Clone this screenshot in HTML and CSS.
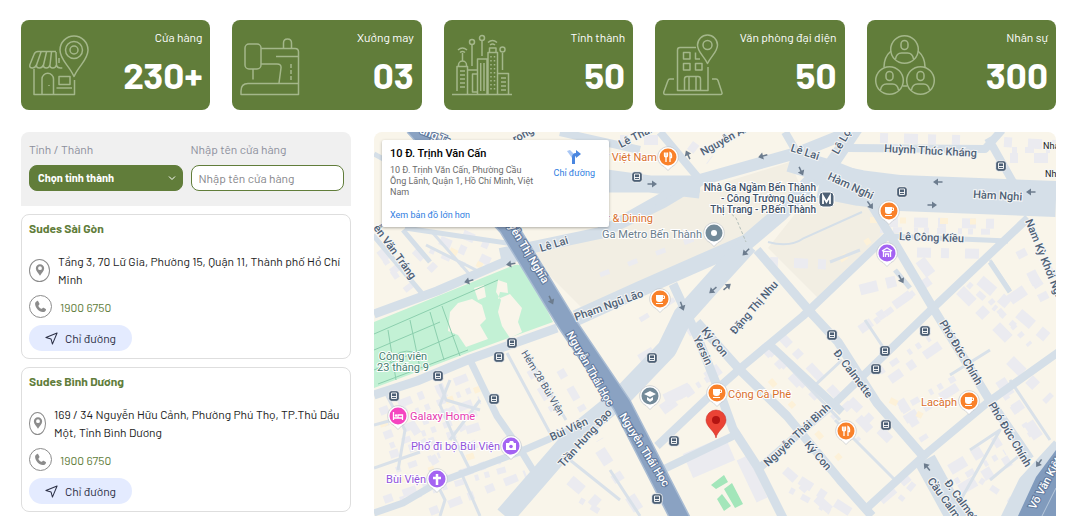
FILE: index.html
```html
<!DOCTYPE html>
<html lang="vi">
<head>
    <meta charset="UTF-8">
    <meta name="viewport" content="width=device-width, initial-scale=1.0">
    <title>Hệ thống cửa hàng</title>
    <link rel="stylesheet" href="styles.css">
</head>
<body>
    <!-- Icon dùng chung -->
    <svg class="sprite" aria-hidden="true">
        <symbol id="i-place" viewBox="0 0 12 16"><path fill="currentColor" fill-rule="evenodd" d="M6 1a5 5 0 0 0-5 5c0 3.500 3 5.500 5 9 2-3.500 5-5.500 5-9a5 5 0 0 0-5-5zm0 2.500a2.300 2.300 0 1 1 0 4.600 2.300 2.300 0 0 1 0-4.600z"/></symbol>
        <symbol id="i-phone" viewBox="0 0 14 14"><path fill="currentColor" d="M3.500 1C2 1.500 1 2.700 1.200 4.500c.5 4.300 4 7.800 8.300 8.400 1.600.2 3-.8 3.400-2.200.1-.4 0-.7-.3-.9L10.400 8.400c-.3-.2-.7-.2-1 .1l-.9.9c-.3.2-.6.2-.9 0C6.400 8.700 5.500 7.800 4.800 6.700c-.2-.3-.2-.6.100-.9l.8-.9c.3-.3.3-.6.1-1L4.500 1.400C4.300 1 3.900.8 3.500 1z"/></symbol>
        <symbol id="i-send" viewBox="0 0 14 14"><path fill="none" stroke="currentColor" stroke-width="1.100" stroke-linejoin="round" d="M13 1 1 6l5.500 1.500L8 13z"/></symbol>
        <symbol id="m-pin" viewBox="-12 -12 24 28"><path fill="#fff" stroke="#b9bdc2" stroke-width=".6" d="M0 13.500-4 9.500A10.300 10.300 0 1 1 4 9.500z"/><circle r="8.500" fill="currentColor"/></symbol>
        <symbol id="m-cup" viewBox="-6 -6 12 12"><path fill="#fff" d="M-4-4h7v4q0 3-3 3h-1q-3 0-3-3zM-4 4h7v1h-7z"/><path fill="none" stroke="#fff" d="M3-3h1.500v2.500H3"/></symbol>
        <symbol id="m-fork" viewBox="-6 -6 12 12"><path fill="none" stroke="#fff" stroke-width="1.300" d="M-3.500-4.500v3q0 1.500 1.500 1.500t1.500-1.500v-3M-2-4.500v9.500M2 5v-9.500q2 1 1.500 5H2"/></symbol>
        <symbol id="m-bus" viewBox="-6 -6 12 12"><rect x="-5.300" y="-5.300" width="10.600" height="10.600" rx="3" fill="#4d6075" stroke="#fff" stroke-width=".8"/><path fill="none" stroke="#fff" stroke-width=".9" d="M-2.500-3h5v5.500h-5zM-2.500.5h5"/></symbol>
        <symbol id="m-arrow" viewBox="-6 -6 12 12"><path fill="none" stroke="#6c7c8e" stroke-width="1.500" d="M-4.500 0h6"/><path fill="#6c7c8e" d="M0-3.500 5 0 0 3.500z"/></symbol>
    </svg>

    <div class="container">
        <div class="stats">
            <div class="stat">
                <svg class="stat-icon" viewBox="0 0 60 60">
                    <path d="M45 41.500C40 30 31 25 31 15a14 14 0 0 1 28 0c0 10-9 15-14 26.500z"/>
                    <circle cx="45" cy="15" r="8.500"/><circle cx="45" cy="15" r="4"/>
                    <path d="M27 16.500H9q-3 0-4 3L.800 30q-.5 3 2.500 3 3 0 4-3 0 3 3 3t4-3q0 3 3 3t3.500-3q0 3 3 3t3.500-3q1 3 4 3h2M12 17 7.500 30M17.500 17 14.500 30M22.500 17 21 30M27 17l.500 13M30 23v5"/>
                    <path d="M5 34v25.500h40.500V45M13 59V44a5.700 5.700 0 0 1 11.500 0v15M30 41.500h11v8H30zM27.500 53H43M20 50v1"/>
                </svg>
                <div class="stat-info"><span>Cửa hàng</span><strong>230+</strong></div>
            </div>
            <div class="stat">
                <svg class="stat-icon" viewBox="0 0 60 60">
                    <rect x="5" y="9" width="16" height="25" rx="4"/>
                    <path d="M21 13.500h34q3.500 0 3.500 3.500v42.500H1V56q0-7.500 7-7.500h50M43.500 13V8q0-4 4-4t4 4v5M36 21.500h22M21 29h16q4.500 0 4 4l-2 15M13 34v10.500"/>
                    <path stroke-dasharray="4 2" d="M51 29v16"/>
                </svg>
                <div class="stat-info"><span>Xưởng may</span><strong>03</strong></div>
            </div>
            <div class="stat">
                <svg class="stat-icon" viewBox="0 0 60 60">
                    <path d="M0 59.500h60M5 56V31.500h10.500v28M6.500 31v-1a4 4 0 0 1 8 0v1M10.500 18v8M6 15q4.500-4 9 0M8 17.500q2.500-2 5 0M15.500 35H25M25 39h-4.500v18H25M25.500 59V24H35v35M28.700 28v28M32 28v28M36 59V17.500h9.500V59M37.500 17v-4H44v4M46 38.500h10.500V59M36 7.500q4.500-4 9 0M38 10q2.500-2 5 0M20 10v21M30 6v15M50.500 18v17"/>
                    <circle cx="20" cy="7" r="2.500"/><circle cx="30" cy="3" r="2.500"/><circle cx="50.500" cy="14.500" r="2.500"/>
                    <path d="M8 36h5M8 40h5M8 44h5M8 48h5M8 52h5M49 43h5M49 47h5M49 51h5M49 55h5"/>
                    <path stroke-dasharray="1.500 2.500" d="M39 21v36M42.500 21v36"/>
                </svg>
                <div class="stat-info"><span>Tỉnh thành</span><strong>50</strong></div>
            </div>
            <div class="stat">
                <svg class="stat-icon" viewBox="0 0 60 60">
                    <path d="M33 12.500H17q-2.500 0-2.500 2.500v40.500H45V32M20.500 17.500H27V24h-6.500zM20.500 28.500H27V35h-6.500zM32.500 28.500H39V35h-6.500zM32.500 17.500V24H37M21.500 55V44q0-2.500 2.500-2.500h11q2.500 0 2.500 2.500v11M26 55V42M33 55V42"/>
                    <path d="M44.500 28.500C41 21 34.500 17 34.500 10a10 10 0 0 1 20 0c0 7-6.500 11-10 18.500z"/><circle cx="44.500" cy="10" r="4.500"/>
                    <path d="M11 44H7q-1.500 0-2 1.500L.800 57q-.5 2.500 1.500 2.500h55q2.500 0 1.500-2.500L55 45.500Q54.500 44 53 44h-4"/>
                </svg>
                <div class="stat-info"><span>Văn phòng đại diện</span><strong>50</strong></div>
            </div>
            <div class="stat">
                <svg class="stat-icon" viewBox="0 0 60 60">
                    <circle cx="29.500" cy="14.500" r="13.800"/><circle cx="14.500" cy="45.500" r="13.800"/><circle cx="45.500" cy="45.500" r="13.800"/>
                    <rect x="26" y="5.500" width="7" height="9" rx="3.500"/><rect x="11" y="36.500" width="7" height="9" rx="3.500"/><rect x="42" y="36.500" width="7" height="9" rx="3.500"/>
                    <path d="M20.500 24q1-6 6-6h6q5 0 6 6M5.500 55q1-6 6-6h6q5 0 6 6M36.500 55q1-6 6-6h6q5 0 6 6M16 16Q9 22 9 32M43 16q7 6 7 16M28 51h4"/>
                </svg>
                <div class="stat-info"><span>Nhân sự</span><strong>300</strong></div>
            </div>
        </div>

        <div class="store-layout">
            <div class="sidebar">
                <form class="filter">
                    <div class="field">
                        <label for="city">Tỉnh / Thành</label>
                        <div class="select-wrap">
                            <select id="city"><option>Chọn tỉnh thành</option><option>Hồ Chí Minh</option><option>Bình Dương</option></select>
                            <svg class="chevron" viewBox="0 0 8 6"><path d="M1 1.500 4 4.500 7 1.500"/></svg>
                        </div>
                    </div>
                    <div class="field">
                        <label for="store">Nhập tên cửa hàng</label>
                        <input id="store" type="text" placeholder="Nhập tên cửa hàng">
                    </div>
                </form>

                <div class="store">
                    <h3>Sudes Sài Gòn</h3>
                    <div class="row">
                        <span class="round"><svg class="ico-place"><use href="#i-place"/></svg></span>
                        <p>Tầng 3, 70 Lữ Gia, Phường 15, Quận 11, Thành phố Hồ Chí Minh</p>
                    </div>
                    <div class="row row-phone">
                        <span class="round round-phone"><svg class="ico-phone"><use href="#i-phone"/></svg></span>
                        <a href="tel:19006750">1900 6750</a>
                    </div>
                    <button class="direction" type="button"><svg class="ico-send"><use href="#i-send"/></svg>Chỉ đường</button>
                </div>

                <div class="store">
                    <h3>Sudes Bình Dương</h3>
                    <div class="row">
                        <span class="round round-slim"><svg class="ico-place"><use href="#i-place"/></svg></span>
                        <p>169 / 34 Nguyễn Hữu Cảnh, Phường Phú Thọ, TP.Thủ Dầu Một, Tỉnh Bình Dương</p>
                    </div>
                    <div class="row row-phone">
                        <span class="round round-phone"><svg class="ico-phone"><use href="#i-phone"/></svg></span>
                        <a href="tel:19006750">1900 6750</a>
                    </div>
                    <button class="direction" type="button"><svg class="ico-send"><use href="#i-send"/></svg>Chỉ đường</button>
                </div>
            </div>

            <div class="map">
                <svg class="map-canvas" viewBox="374 132 682 384" preserveAspectRatio="xMidYMid slice">
                    <rect x="374" y="132" width="682" height="384" fill="#f9f5ea"/>

                    <!-- Khu nhà ga -->
                    <path fill="#f2eee3" d="M524 250 600 232 700 190 790 162 800 185 760 230 640 286 582 308zM768 248 806 200 862 196 884 232 820 300z"/>

                    <!-- Nhà cửa -->
                    <g class="buildings">
                        <path stroke-width="9" stroke-dasharray="12 9 7 16 18 10" d="M380 250 410 290M415 250 440 275M440 240 490 262M463 234 500 250"/>
                        <path stroke-width="8" stroke-dasharray="9 11 14 7 6 13" d="M380 412 470 376M384 436 480 400M390 455 486 424M384 500 500 460M430 512 526 474M400 405 440 470M440 390 476 450M560 370 600 440M530 370 560 420"/>
                        <path stroke-width="11" stroke-dasharray="16 12 9 18" d="M600 450 640 512M570 480 610 514M662 410 720 368M640 360 690 330"/>
                        <path stroke-width="9" stroke-dasharray="14 8 8 12 20 10" d="M762 345 800 385M780 335 870 430M800 480 850 512M785 470 830 510M850 400 890 440M860 330 930 280M890 380 940 345M905 420 960 385M900 400 925 440"/>
                        <path stroke-width="11" stroke-dasharray="18 9 10 14" d="M960 290 1010 340M980 280 1050 340M1010 300 1054 270M1000 380 1040 440M1010 360 1050 400M950 470 1000 440M960 490 1010 460M880 500 915 470M860 290 900 280M920 260 935 280"/>
                        <path stroke-width="10" stroke-dasharray="8 16 14 10" d="M890 222 1004 224M893 252 990 254M1010 158 1056 158M1004 142 1056 145M880 138 960 140M690 145 710 160M620 140 660 140M1020 250 1050 310M770 262 840 265"/>
                        <path stroke-width="5" stroke-dasharray="10 20" d="M600 275 730 225M640 320 690 290"/>
                        <path stroke-width="6" stroke-dasharray="5 8 9 12 4 6" d="M385 260 400 282M430 250 470 268M384 424 476 388M390 446 480 412M396 470 440 455M400 500 510 468M580 500 600 512M668 404 716 374M770 352 862 444M790 490 830 512M875 322 925 284M880 372 930 338M900 410 955 378M968 284 1015 326M990 300 1030 345M1005 395 1035 440M955 482 1005 452M900 500 915 482M880 230 1000 232M1012 150 1050 150M980 480 1010 500"/>
                        <path stroke-width="26" d="M688 466 730 448"/>
                        <path stroke-width="12" d="M742 458 762 500M665 400 690 388"/>
                    </g>
                    <g class="houses">
                        <path stroke-width="6" stroke-dasharray="8 22 6 34" d="M450 250 500 275M380 425 490 385M400 480 520 440M770 380 850 470M870 220 1010 222M890 400 950 430M840 260 870 240"/>
                    </g>

                    <!-- Công viên -->
                    <path fill="#c3f1d5" d="M374 322 512 266Q522 262 528 272L553 322 470 352 374 388z"/>
                    <path fill="#f9f5ea" d="M450 312l8-9 14-4 10 6 4 14-6 6 8 14-22 8-8-12-10-4zM474 288l10-3 2 12-8 3zM498 280l9 3 1 10-8-1-2 7 12-5 12 14-4 14 4 10-12 6-8-12-4-14 3-12-5-8z"/>
                    <path class="park-path" d="M374 334 498 280M374 350 440 322M374 370 455 335M378 384 468 350M388 330 396 380M410 320 420 368M430 312 444 360M442 306 460 356M390 362q8-14 24-10"/>
                    <path fill="#a3e6ba" d="M711 485 724 475 728 482 716 489zM724 489 732 483 743 504 735 508zM717 499 722 494 731 506 724 511z"/>

                    <!-- Đường phố -->
                    <g class="alleys">
                        <path d="M426 245 480 272M432 232 470 275M385 392 405 430 398 470M440 384 446 400 480 410M450 380 440 405 455 440 470 470M374 425 400 418M430 470 445 500 440 516M480 400 450 440M460 470 480 516M374 468 420 452M507 353 550 433M525 350 566 420M570 460 620 500M610 470 640 516M773 350 840 420M812 388 842 360M835 420 895 480M865 320 885 350M950 375 990 350M955 510 1000 430 970 450M990 480 1020 455M1010 380 1050 440M990 260 1010 290M860 250 830 262"/>
                    </g>
                    <g class="roads">
                        <path stroke-width="9" d="M374 314 437 291 518 256M374 395 417 381 470 359 557 328"/>
                        <path stroke-width="5" d="M373 235 425 297M403 230 430 262M374 154 400 168M405 228 520 245"/>
                        <path stroke-width="7" d="M470 360 497 416 520 449 542 485M374 513 403 503 437 483 517 453 570 430 600 412"/>
                        <path stroke-width="12" d="M500 254 600 233 663 202 700 180 800 152 850 132"/>
                        <path stroke-width="17" d="M600 184 700 184M606 178 650 184 700 190"/>
                        <path stroke-width="8" d="M660 132 700 180M560 132 640 150M785 132 800 158M610 226 665 195"/>
                        <path stroke-width="16" d="M576 318 640 289 747 242 780 214 822 170"/>
                        <path stroke-width="24" d="M790 160 830 172 870 188"/>
                        <path stroke-width="36" d="M820 180 860 188 900 193 1056 199"/>
                        <path stroke-width="14" d="M825 174 858 125"/>
                        <path stroke-width="8" d="M848 148 985 149 1002 130M988 138 1014 184"/>
                        <path stroke-width="5" d="M890 236 1008 241"/>
                        <path stroke-width="8" d="M1028 218 933 308 838 400 757 470M1060 351 987 403 927 453 867 508"/>
                        <path stroke-width="9" d="M866 196 890 235 933 308 987 396 1030 459M757 250 813 315 838 342 877 403 923 456"/>
                        <path stroke-width="22" d="M925 460 958 520"/>
                        <path stroke-width="20" d="M748 244 717 278 683 316 667 349 620 398 577 433 505 516"/>
                        <path stroke-width="9" d="M673 284 697 336 720 393 733 429 757 466 784 520M697 322 740 370 787 416 840 480 872 516"/>
                        <path stroke-width="8" d="M887 236 803 316 743 366 717 389 657 446M662 470 733 436M770 345 842 412"/>
                        <path stroke-width="5" d="M895 270 910 288M990 262 1010 292"/>
                        <path stroke-width="16" d="M1060 446 1026 483 1008 520"/>
                    </g>
                    <path class="station-path" d="M728 211 736 218 746 242"/>
                    <path class="station-road" d="M768 242Q790 248 804 238L862 212"/>

                    <!-- Trục chính -->
                    <path class="highway-edge" d="M414 126 508 227 566 322 622 405 682 522"/>
                    <path class="highway" d="M414 126 508 227 566 322 622 405 682 522"/>
                    <path fill="#819bbd" d="M1056 450 1036 477 1018 516H1056z"/>
                    <path fill="none" stroke="#b8c9dc" d="M1056 488 1042 516"/>

                    <g class="arrows">
                        <use href="#m-arrow" x="-6" y="-6" width="12" height="12" transform="translate(511 264) rotate(170)"/>
                        <use href="#m-arrow" x="-6" y="-6" width="12" height="12" transform="translate(469 281) rotate(165)"/>
                        <use href="#m-arrow" x="-6" y="-6" width="12" height="12" transform="translate(551 300) rotate(65)"/>
                        <use href="#m-arrow" x="-6" y="-6" width="12" height="12" transform="translate(652 184)"/>
                        <use href="#m-arrow" x="-6" y="-6" width="12" height="12" transform="translate(688 155) rotate(-115)"/>
                        <use href="#m-arrow" x="-6" y="-6" width="12" height="12" transform="translate(763 156) rotate(165)"/>
                        <use href="#m-arrow" x="-6" y="-6" width="12" height="12" transform="translate(801 171) rotate(65)"/>
                        <use href="#m-arrow" x="-6" y="-6" width="12" height="12" transform="translate(746 252) rotate(135)"/>
                        <use href="#m-arrow" x="-6" y="-6" width="12" height="12" transform="translate(713 290) rotate(140)"/>
                        <use href="#m-arrow" x="-6" y="-6" width="12" height="12" transform="translate(727 287) rotate(-40)"/>
                        <use href="#m-arrow" x="-6" y="-6" width="12" height="12" transform="translate(682 306) rotate(70)"/>
                        <use href="#m-arrow" x="-6" y="-6" width="12" height="12" transform="translate(938 182) rotate(180)"/>
                        <use href="#m-arrow" x="-6" y="-6" width="12" height="12" transform="translate(932 205)"/>
                        <use href="#m-arrow" x="-6" y="-6" width="12" height="12" transform="translate(1031 192) rotate(180)"/>
                        <use href="#m-arrow" x="-6" y="-6" width="12" height="12" transform="translate(870 205) rotate(55)"/>
                        <use href="#m-arrow" x="-6" y="-6" width="12" height="12" transform="translate(901 279) rotate(60)"/>
                        <use href="#m-arrow" x="-6" y="-6" width="12" height="12" transform="translate(927 467) rotate(-130)"/>
                        <use href="#m-arrow" x="-6" y="-6" width="12" height="12" transform="translate(1039 463) rotate(125)"/>
                    </g>

                    <!-- Tên đường -->
                    <g class="streets">
                        <text transform="translate(621 148) rotate(-27)">Lê Thánh Tôn</text>
                        <text transform="translate(703 156) rotate(-29)">Nguyễn An Ninh</text>
                        <text transform="translate(790 151) rotate(18)">Lê Lai</text>
                        <text transform="translate(838 155) rotate(-60)">Lê Lợi</text>
                        <text transform="translate(884 152) rotate(3)">Huỳnh Thúc Kháng</text>
                        <text transform="translate(827 179) rotate(25)">Hàm Nghi</text>
                        <text transform="translate(973 198) rotate(3)">Hàm Nghi</text>
                        <text transform="translate(899 240) rotate(2)">Lê Công Kiều</text>
                        <text transform="translate(1025 221) rotate(68)">Nam Kỳ Khởi Nghĩa</text>
                        <text transform="translate(515 143) rotate(-28)">rọng</text>
                        <text transform="translate(373 228) rotate(54)">ễn Văn Tráng</text>
                        <text transform="translate(541 252) rotate(-17)">Lê Lai</text>
                        <text transform="translate(576 321) rotate(-20)">Phạm Ngũ Lão</text>
                        <text class="small" transform="translate(521 353) rotate(59)">Hẻm 28 Bùi Viện</text>
                        <text transform="translate(552 441) rotate(-25)">Bùi Viện</text>
                        <text transform="translate(563 468) rotate(-48)">Trần Hưng Đạo</text>
                        <text transform="translate(701 331) rotate(50)">Ký Con</text>
                        <text transform="translate(693 338) rotate(65)">Yersin</text>
                        <text transform="translate(735 335) rotate(-49)">Đặng Thị Nhu</text>
                        <text transform="translate(833 353) rotate(53)">Đ. Calmette</text>
                        <text transform="translate(939 323) rotate(59)">Phó Đức Chính</text>
                        <text transform="translate(988 405) rotate(59)">Phó Đức Chính</text>
                        <text transform="translate(927 481) rotate(54)">Cầu Calmette</text>
                        <text transform="translate(944 483) rotate(54)">Đ. Calmette</text>
                        <text transform="translate(768 467) rotate(-43)">Nguyễn Thái Bình</text>
                        <text transform="translate(804 445) rotate(49)">Ký Con</text>
                        <text class="tiny" x="1043" y="149">Nhân</text>
                        <text class="tiny" x="1045" y="177">Nhân</text>
                    </g>
                    <g class="main-streets">
                        <text transform="translate(419 133) rotate(22)">ăng Tr</text>
                        <text transform="translate(502 216) rotate(59)">guyễn Thị Nghĩa</text>
                        <text transform="translate(566 334) rotate(60)">Nguyễn Thái Học</text>
                        <text transform="translate(619 416) rotate(58)">Nguyễn Thái Học</text>
                        <text transform="translate(1035 510) rotate(-62)">Võ Văn Kiệt</text>
                    </g>

                    <!-- Địa điểm -->
                    <g class="places">
                        <text class="orange" x="657" y="161" text-anchor="end">Phở Việt Nam</text>
                        <text class="orange" x="653" y="222" text-anchor="end">Bar &amp; Dining</text>
                        <text class="gray" x="702" y="238" text-anchor="end">Ga Metro Bến Thành</text>
                        <g class="station" text-anchor="end">
                            <text x="816" y="191">Nhà Ga Ngầm Bến Thành</text>
                            <text x="816" y="202">- Công Trường Quách</text>
                            <text x="816" y="213">Thị Trang - P.Bến Thành</text>
                        </g>
                        <g class="green" text-anchor="middle">
                            <text x="403" y="360">Công viên</text>
                            <text x="403" y="371">23 tháng 9</text>
                        </g>
                        <text class="pink" x="410" y="420">Galaxy Home</text>
                        <text class="purple" x="500" y="450" text-anchor="end">Phố đi bộ Bùi Viện</text>
                        <text class="purple" x="426" y="483" text-anchor="end">Bùi Viện</text>
                        <text class="orange" x="728" y="398">Cộng Cà Phê</text>
                        <text class="orange" x="957" y="406" text-anchor="end">Lacàph</text>
                    </g>
                    <g class="pin-orange">
                        <use href="#m-pin" x="656" y="145" width="24" height="28"/><use href="#m-fork" x="662" y="151" width="12" height="12"/>
                        <use href="#m-pin" x="834" y="419" width="24" height="28"/><use href="#m-fork" x="840" y="425" width="12" height="12"/>
                        <use href="#m-pin" x="648" y="287" width="24" height="28"/><use href="#m-cup" x="654" y="293" width="12" height="12"/>
                        <use href="#m-pin" x="877" y="199" width="24" height="28"/><use href="#m-cup" x="883" y="205" width="12" height="12"/>
                        <use href="#m-pin" x="705" y="381" width="24" height="28"/><use href="#m-cup" x="711" y="387" width="12" height="12"/>
                        <use href="#m-pin" x="957" y="389" width="24" height="28"/><use href="#m-cup" x="963" y="395" width="12" height="12"/>
                    </g>
                    <g class="pin-gray">
                        <use href="#m-pin" x="702" y="221" width="24" height="28"/><circle cx="714" cy="233" r="3" fill="#fff"/>
                        <use href="#m-pin" x="638" y="384" width="24" height="28"/><path fill="#fff" d="M644 394 650 391 656 394 650 397zM647 397 650 399 653 397V400L650 402 647 400z"/>
                    </g>
                    <g class="pin-purple">
                        <use href="#m-pin" x="875" y="241" width="24" height="28"/><path fill="none" stroke="#fff" stroke-width="1.300" d="M882 251 887 248 892 251M883.500 257V251.500H890.500V257M885.500 257V254H888.500V257"/>
                        <use href="#m-pin" x="499" y="434" width="24" height="28"/><path fill="#fff" d="M506 443h3l1-2h3l1 2h2v7h-10z"/><circle cx="511" cy="446.500" r="1.800" fill="#a463f2"/>
                        <use href="#m-pin" x="425" y="467" width="24" height="28"/><path fill="none" stroke="#fff" stroke-width="2.500" d="M437 474V485M433 478H441"/>
                    </g>
                    <g class="pin-pink">
                        <use href="#m-pin" x="386" y="404" width="24" height="28"/><path fill="none" stroke="#fff" stroke-width="1.300" d="M393.500 412V420M393.500 418H402.500V420M402.500 418V415H398V418"/><circle cx="396" cy="415.500" r="1.200" fill="#fff"/>
                    </g>
                    <rect x="819" y="192" width="15" height="15" rx="4" fill="#4d6075" stroke="#fff"/>
                    <path fill="none" stroke="#fff" stroke-width="1.800" d="M823 204V196L826.500 202 830 196V204"/>

                    <!-- Trạm xe buýt -->
                    <g>
                        <use href="#m-bus" x="631" y="171" width="12" height="12"/>
                        <use href="#m-bus" x="896" y="186" width="12" height="12"/>
                        <use href="#m-bus" x="995" y="160" width="12" height="12"/>
                        <use href="#m-bus" x="506" y="337" width="12" height="12"/>
                        <use href="#m-bus" x="493" y="351" width="12" height="12"/>
                        <use href="#m-bus" x="432" y="370" width="12" height="12"/>
                        <use href="#m-bus" x="388" y="390" width="12" height="12"/>
                        <use href="#m-bus" x="488" y="393" width="12" height="12"/>
                        <use href="#m-bus" x="646" y="352" width="12" height="12"/>
                        <use href="#m-bus" x="668" y="435" width="12" height="12"/>
                        <use href="#m-bus" x="651" y="493" width="12" height="12"/>
                        <use href="#m-bus" x="826" y="329" width="12" height="12"/>
                        <use href="#m-bus" x="919" y="325" width="12" height="12"/>
                        <use href="#m-bus" x="879" y="345" width="12" height="12"/>
                        <use href="#m-bus" x="870" y="363" width="12" height="12"/>
                        <use href="#m-bus" x="880" y="419" width="12" height="12"/>
                    </g>

                    <path fill="#ea4335" stroke="#c5221f" stroke-width=".5" d="M716 438C715 431 706 427 706 420a10 10 0 0 1 20 0c0 7-9 11-10 18z"/>
                    <circle cx="716" cy="420" r="4" fill="#b31412"/>
                </svg>

                <div class="place-card">
                    <div class="place-info">
                        <h4>10 Đ. Trịnh Văn Cấn</h4>
                        <p>10 Đ. Trịnh Văn Cấn, Phường Cầu Ông Lãnh, Quận 1, Hồ Chí Minh, Việt Nam</p>
                        <a href="#">Xem bản đồ lớn hơn</a>
                    </div>
                    <a class="place-route" href="#">
                        <svg viewBox="0 0 14 14"><path fill="#a9c7f5" d="M0 1 3 0 8 5V8H5z"/><path fill="#4a86e0" d="M5 14V7.500Q5 3 9 3V0l5 4-5 4V6Q8 6 8 8v6z"/></svg>
                        Chỉ đường
                    </a>
                </div>
            </div>
        </div>
    </div>
</body>
</html>
```
FILE: styles.css
```css
* {
    box-sizing: border-box;
    margin: 0;
    padding: 0;
}

body {
    font-family: 'Barlow', 'Roboto', sans-serif;
    font-size: 12px;
    line-height: 18px;
    color: #1c1c1c;
    background: #fff;
}

a {
    text-decoration: none;
}

.sprite {
    display: none;
}

.container {
    padding: 20px 16px 0 21px;
}

/* Thống kê */
.stats {
    display: grid;
    grid-template-columns: repeat(5, 1fr);
    gap: 22px;
    margin-bottom: 22px;
}

.stat {
    display: flex;
    justify-content: space-between;
    align-items: center;
    height: 90px;
    padding: 0 8px;
    border-radius: 8px;
    background-color: #617d3a;
    color: #fff;
}

.stat-icon {
    flex: none;
    width: 60px;
    height: 60px;
    overflow: visible;
    fill: none;
    stroke: #a4b78a;
    stroke-width: 1.5;
    stroke-linejoin: round;
}

.stat-info {
    display: flex;
    flex-direction: column;
    align-items: flex-end;
    gap: 4px;
    padding-bottom: 4px;
    white-space: nowrap;
}

.stat-info span {
    margin-left: -20px;
}

.stat-info strong {
    font-size: 37px;
    line-height: 48px;
}

/* Danh sách cửa hàng */
.store-layout {
    display: grid;
    grid-template-columns: 330px 1fr;
    align-items: start;
    gap: 23px;
}

.sidebar {
    display: flex;
    flex-direction: column;
    gap: 8px;
}

.filter {
    display: flex;
    gap: 8px;
    padding: 8px 7px 15px 8px;
    border-radius: 8px 8px 0 0;
    background-color: #f0f0f0;
}

.field {
    flex: 1;
    min-width: 0;
}

.field label {
    display: block;
    margin-bottom: 7px;
    color: #8c8f9c;
}

.select-wrap {
    position: relative;
}

select,
input {
    display: block;
    width: 100%;
    height: 26px;
    padding: 0 8px;
    border: 1px solid #617d3a;
    border-radius: 8px;
    font: inherit;
}

select {
    appearance: none;
    background-color: #617d3a;
    color: #fff;
    font-size: 11px;
    font-weight: 700;
}

input {
    padding: 0 7px;
    background-color: #fff;
}

input::placeholder {
    color: #85858a;
}

.chevron {
    position: absolute;
    top: 10px;
    right: 7px;
    width: 8px;
    height: 6px;
    fill: none;
    stroke: #fff;
    pointer-events: none;
}

.store {
    padding: 4px 8px 7px 7px;
    border: 1px solid #dedede;
    border-radius: 8px;
}

.store h3 {
    margin-bottom: 15px;
    font-size: 12px;
    line-height: 18px;
    color: #617d3a;
}

.row {
    display: flex;
    align-items: center;
    gap: 8px;
}

.row-phone {
    margin: 7px 0;
}

.row a {
    color: #617d3a;
}

.round {
    display: flex;
    flex: none;
    justify-content: center;
    align-items: center;
    width: 21px;
    height: 23px;
    border: 1px solid #8c8c8c;
    border-radius: 50%;
    color: #8c8c8c;
}

.round-slim {
    width: 17px;
}

.round-phone {
    width: 23px;
}

.ico-place {
    width: 10px;
    height: 14px;
}

.ico-phone {
    width: 13px;
    height: 13px;
}

.ico-send {
    width: 13px;
    height: 13px;
}

.direction {
    display: flex;
    align-items: center;
    gap: 7px;
    height: 26px;
    padding: 0 16px;
    border: none;
    border-radius: 13px;
    background-color: #e4ebff;
    color: #2b2f45;
    font: inherit;
    cursor: pointer;
}

/* Bản đồ */
.map {
    position: relative;
    height: 384px;
    overflow: hidden;
    border-radius: 8px 8px 0 0;
    font-family: 'Roboto', sans-serif;
}

.map-canvas {
    display: block;
    width: 100%;
    height: 100%;
    font-size: 11px;
}

.buildings path {
    fill: none;
    stroke: #ebebf0;
}

.houses path {
    fill: none;
    stroke: #fdf1d8;
}

.park-path {
    fill: none;
    stroke: #8ccfae;
}

.alleys path {
    fill: none;
    stroke: #d9e1e9;
    stroke-width: 3;
    stroke-linejoin: round;
}

.roads path {
    fill: none;
    stroke: #d5dfe8;
    stroke-linejoin: round;
}

.station-path {
    fill: none;
    stroke: #b4bfba;
    stroke-dasharray: 3 2;
}

.station-road {
    fill: none;
    stroke: #d5dfe8;
    stroke-width: 2;
}

.highway-edge {
    fill: none;
    stroke: #a9bcd3;
    stroke-width: 20;
}

.highway {
    fill: none;
    stroke: #8aa2c2;
    stroke-width: 17;
}

.streets text {
    fill: #4f6176;
    stroke: #f5f6f5;
    stroke-width: 2;
    paint-order: stroke;
    font-weight: 500;
}

.streets .small {
    font-size: 10px;
    font-weight: 400;
}

.streets .tiny {
    font-size: 9px;
    fill: #222;
    font-weight: 400;
}

.main-streets text {
    fill: #fff;
    stroke: #60789c;
    stroke-width: 2;
    paint-order: stroke;
    font-weight: 500;
}

.places text {
    stroke: #fff;
    stroke-width: 2;
    paint-order: stroke;
}

.orange {
    fill: #d9702c;
}

.gray {
    fill: #6a7d8c;
}

.pink {
    fill: #e639ae;
}

.purple {
    fill: #9153db;
}

.green {
    fill: #46806f;
}

.station {
    fill: #3f5268;
    font-size: 10px;
    font-weight: 500;
}

.pin-orange {
    color: #f9812a;
}

.pin-gray {
    color: #738a99;
}

.pin-purple {
    color: #a463f2;
}

.pin-pink {
    color: #f545c0;
}

.place-card {
    position: absolute;
    top: 8px;
    left: 8px;
    display: flex;
    justify-content: space-between;
    width: 227px;
    padding: 6px 14px 3px 8px;
    border-radius: 2px;
    background-color: #fff;
    box-shadow: 0 1px 3px rgba(0, 0, 0, 0.3);
    font-size: 9px;
}

.place-info {
    width: 146px;
}

.place-info h4 {
    margin-bottom: 4px;
    font-size: 11px;
    line-height: 15px;
    font-weight: 500;
    color: #000;
}

.place-info p {
    margin-bottom: 8px;
    line-height: 11px;
    color: #6b6b6b;
}

.place-card a {
    color: #2f7de1;
}

.place-route {
    display: flex;
    flex-direction: column;
    align-items: center;
    padding-top: 4px;
}

.place-route svg {
    width: 14px;
    height: 14px;
}
```
